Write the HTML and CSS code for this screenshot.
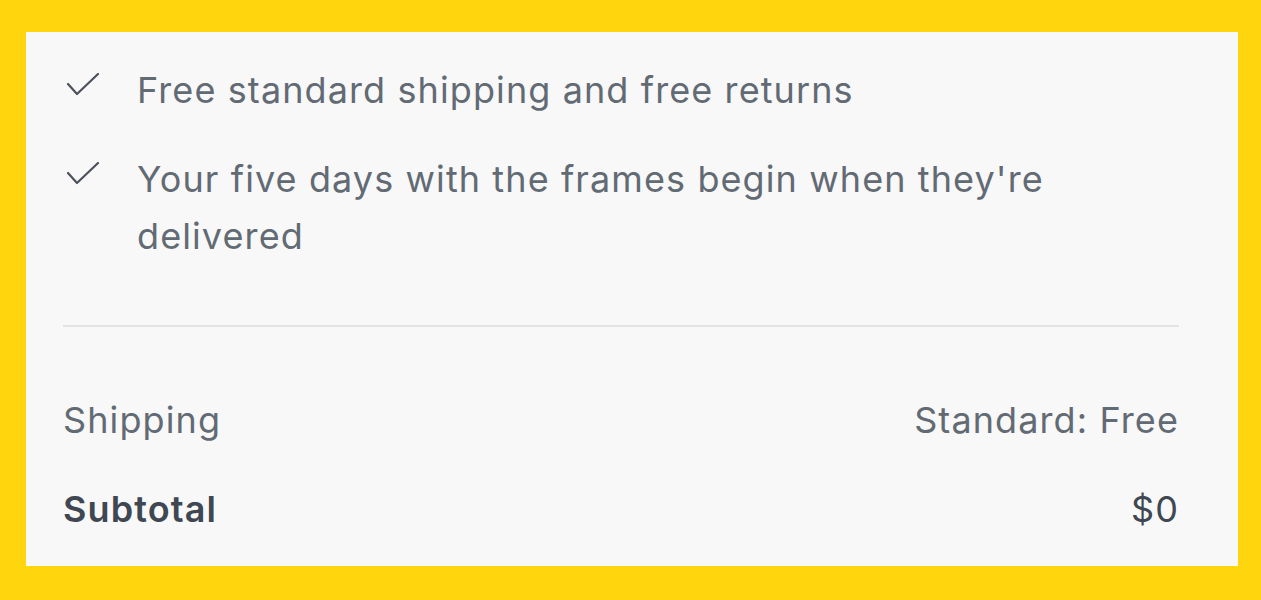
FILE: index.html
```html
<!DOCTYPE html>
<html lang="en">
<head>
  <meta charset="UTF-8">
  <meta name="viewport" content="width=device-width, initial-scale=1.0">
  <title>Order Summary</title>
  <link rel="stylesheet" href="styles.css">
</head>
<body>

  <div class="summary">
    <ul class="perks">
      <li class="perk">
        <svg class="check" width="34" height="24" viewBox="0 0 34 24">
          <polyline points="2,11 11,21 32,1" />
        </svg>
        <span>Free standard shipping and free returns</span>
      </li>
      <li class="perk">
        <svg class="check" width="34" height="24" viewBox="0 0 34 24">
          <polyline points="2,11 11,21 32,1" />
        </svg>
        <span>Your five days with the frames begin when they're delivered</span>
      </li>
    </ul>

    <div class="divider"></div>

    <div class="row">
      <span>Shipping</span>
      <span>Standard: Free</span>
    </div>
    <div class="row total">
      <span>Subtotal</span>
      <span>$0</span>
    </div>
  </div>

</body>
</html>
```

FILE: styles.css
```css
body {
  background-color: #ffd60d;
  margin: 0;
  padding: 32px 23px 34px 26px;
  font-family: Inter, Lato, sans-serif;
  color: #626a74;
  letter-spacing: 1.1px;
}
.summary {
  background-color: #f8f8f8;
  padding: 30px 59px 28px 37px;
}
.perks {
  list-style: none;
  margin: 0;
  padding: 0;
  display: flex;
  flex-direction: column;
  gap: 32px;
}
.perk {
  display: grid;
  grid-template-columns: 74px 1fr;
  align-items: start;
  font-size: 36px;
  line-height: 57px;
}
.check {
  margin: 11px 0 0 3px;
  fill: none;
  stroke: #4b525b;
  stroke-width: 2.2;
  stroke-linecap: round;
  stroke-linejoin: round;
}
.divider {
  height: 2px;
  background-color: #e3e3e3;
  margin: 60px 0 65px;
}
.row {
  display: flex;
  justify-content: space-between;
  font-size: 36px;
  line-height: 57px;
}
.row + .row {
  margin-top: 32px;
}
.row.total {
  font-weight: 600;
  color: #3e4752;
}
.row.total span:last-child {
  font-weight: normal;
}
```
